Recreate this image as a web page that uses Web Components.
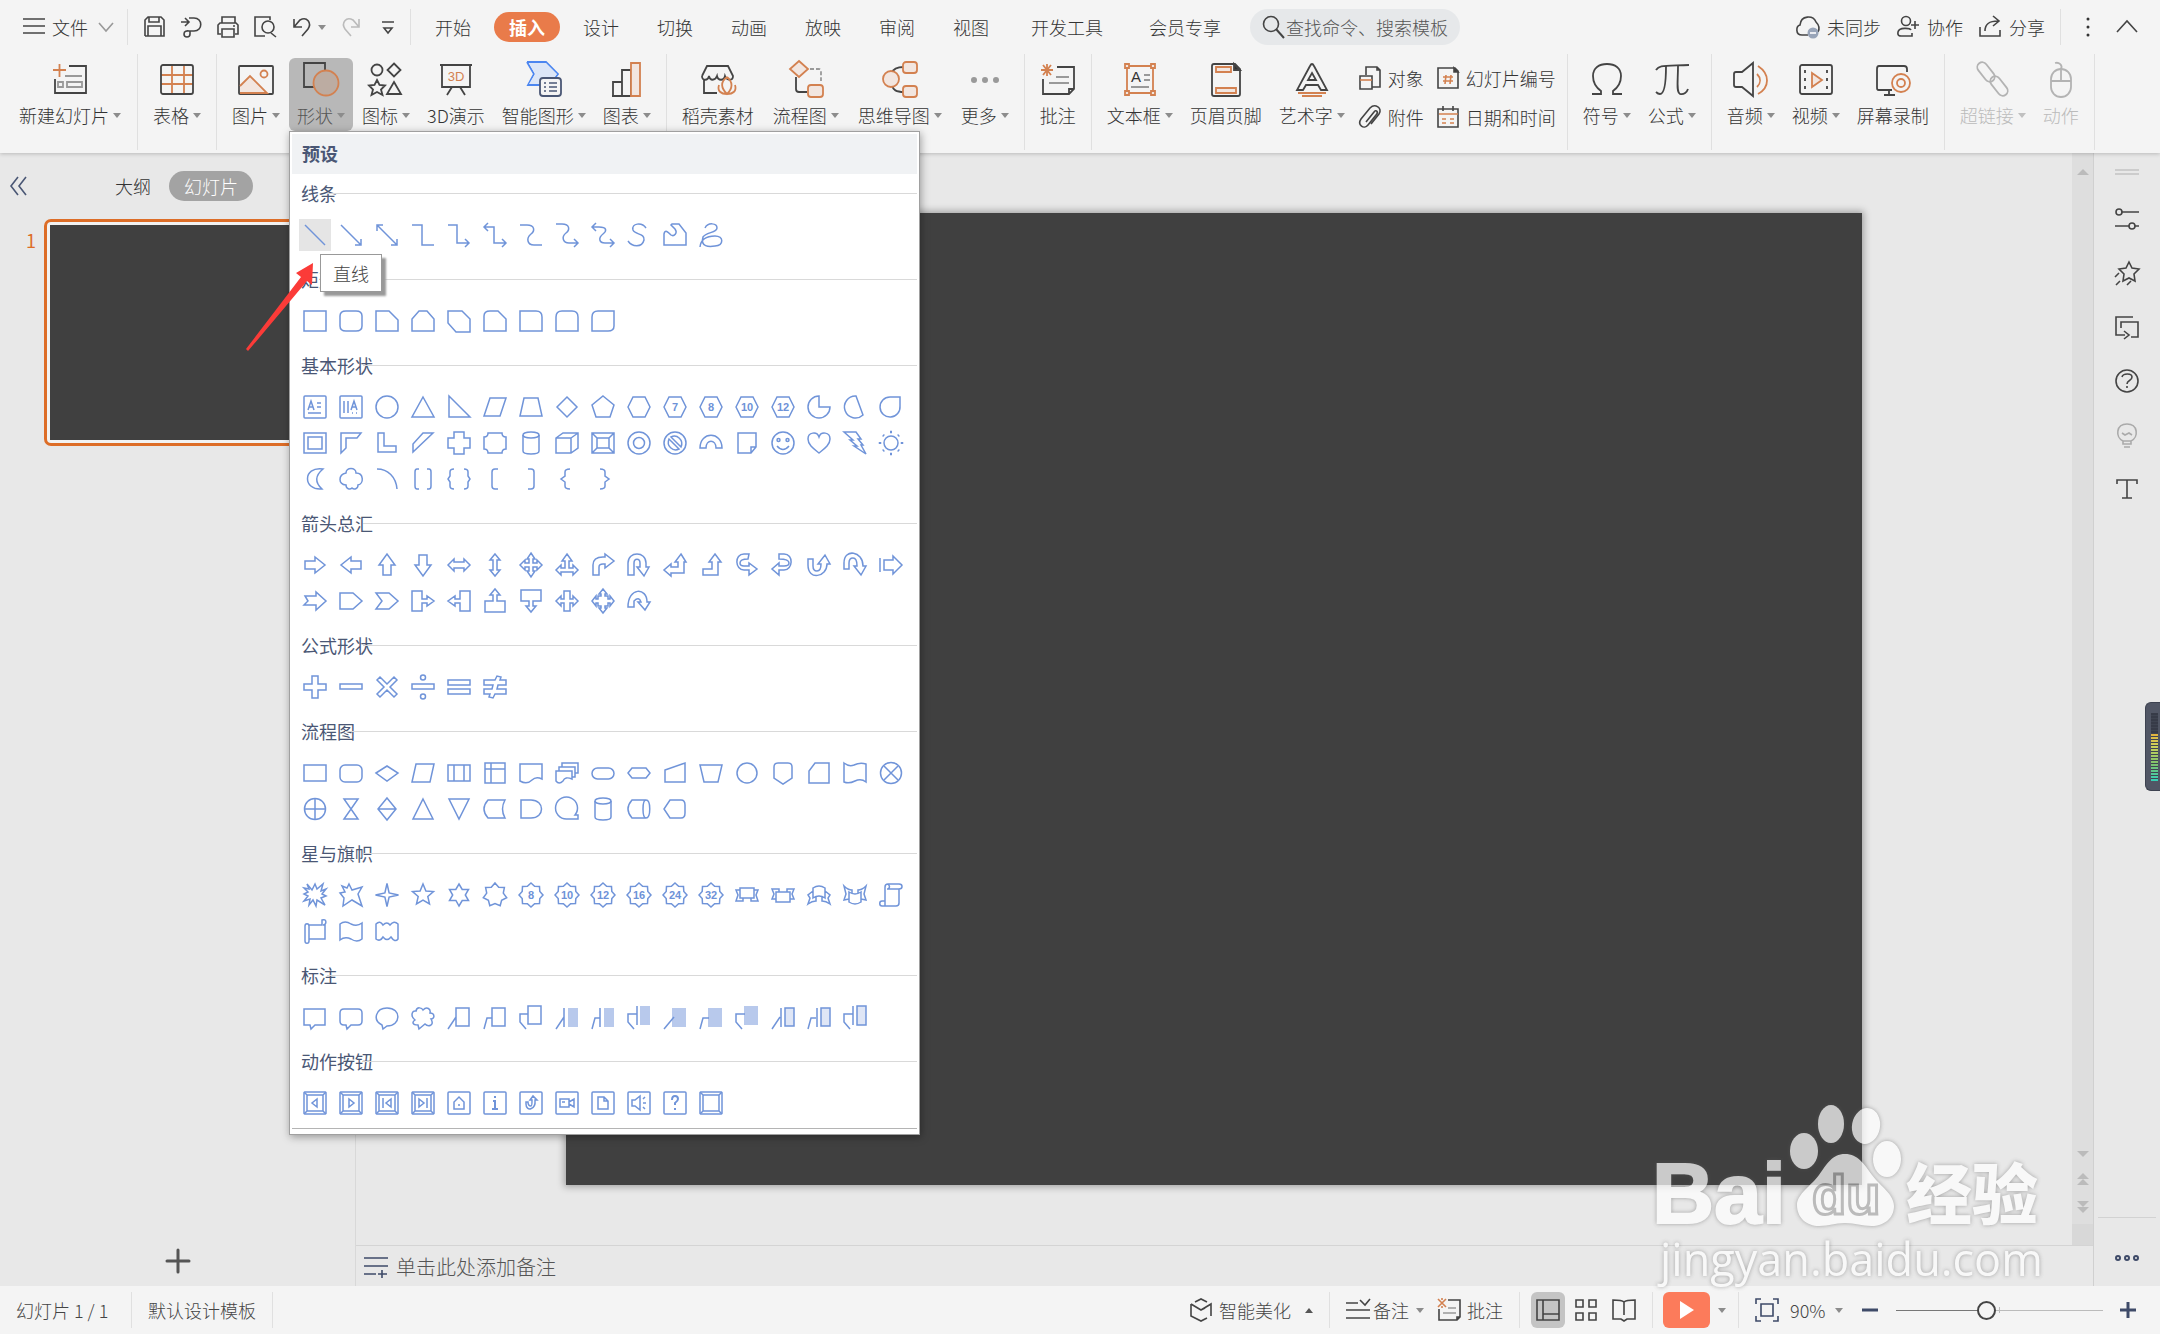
<!DOCTYPE html>
<html lang="zh-CN">
<head>
<meta charset="utf-8">
<title>演示文稿</title>
<style>
html,body{margin:0;height:100%}
body{font:18px/24px "Noto Sans CJK SC","Noto Sans",sans-serif;font-weight:300;color:#333;background:#e8e8e8;overflow:hidden}
</style>
</head>
<body>
<slides-app></slides-app>
<script>
const BASE = `*{box-sizing:border-box}button,input,select{font:inherit;color:inherit;background:none;border:0;padding:0;margin:0;outline:0}button{cursor:pointer;white-space:nowrap}`;
function element(name, css, html, setup) {
  const t = document.createElement('template');
  t.innerHTML = `<style>${BASE}${css}</style>${html}`;
  customElements.define(name, class extends HTMLElement {
    connectedCallback() {
      if (this.shadowRoot) return;
      this.attachShadow({ mode: 'open' }).append(t.content.cloneNode(true));
      if (setup) setup(this, this.shadowRoot);
    }
  });
}

/* ---------- icon drawings ---------- */
const O = '#d38150', F = '#f2e6e0', G = '#999';
const o = (d, f = 'none') => `<path d="${d}" stroke="${O}" fill="${f}"/>`;
const g = d => `<path d="${d}" stroke="${G}"/>`;
const p = (d, x = '') => `<path d="${d}" ${x}/>`;
const BIG = {
  slide: p('M17 5H34V32H3V18') + o('M1 9H14M7.5 3V16') + g('M13 15H30M6 21h5v5h-5zM15 21h15v5h-15z'),
  table: o('M13 4V33M25 4V33M2 14H34M2 23H34') + '<rect x="2" y="4" width="32" height="29" rx="2"/>',
  picture: '<rect x="1" y="5" width="34" height="28" rx="1"/>' + o('M2 25L12 15L29 32H2', F) + `<circle cx="26" cy="13" r="3.5" stroke="${O}"/>`,
  shapes: p('M22 11V2H1V26H12') + `<circle cx="23" cy="22" r="12.5" stroke="${O}" fill="#bcaca2"/>`,
  icons: '<circle cx="9" cy="9" r="5.5"/>' + p('M26 2.5l6.500 6.500-6.500 6.500-6.500-6.500z'.replaceAll('.500', '.5')) + p('M9 19l2.5 5 5.5.5-4 4 1.5 5.5-5.5-3-5.5 3 1.5-5.5-4-4 5.5-.5z') + p('M26 21l7 12h-14z'),
  show3d: p('M2 4H34M4 4V26H32V4M14 26L9 34M22 26L27 34') + `<text x="18" y="20" font-size="13" text-anchor="middle" fill="${O}" stroke="none">3D</text>`,
  smart: '<path d="M1 1H20L32 13L29 17M1 1L8 13L2 24H14" stroke="#4c86f0" fill="none"/><path d="M3 2H20L31 13L28 17H14V23H3L9 13Z" fill="#dce6f7" stroke="none"/><rect x="14" y="17" width="21" height="18" rx="3" fill="#f4f4f4" stroke="#4a5775"/><path d="M18 22h2M18 26h2M18 30h2M23 22h8M23 26h8M23 30h8" stroke="#4a5775" stroke-width="1.5"/>',
  chart: p('M4 35V21H13V35M13 21V9H22V35M3 35H31') + o('M22 2H31V35H22Z', F),
  store: p('M2 15L7 5H28L33 15C33 20 27 20 25 15C24 20 18 20 17 15C15 20 10 20 9 15C8 20 2 20 2 15M4 18V32H17') + o('M27 16C20 21 21 27 27 33C33 27 33 21 27 16M19 24C17 30 21 33 27 33M35 24C37 30 33 33 27 33'),
  flow: p('M8 16V28Q8 31 11 31H19') + o('M11 0L20 8L11 16L2 8Z', F) + `<path d="M22 8H31Q33 8 33 10V20" stroke="#999" stroke-dasharray="4 2"/><rect x="20" y="24" width="15" height="12" rx="3" stroke="${O}" fill="${F}"/>`,
  mind: p('M22 6C14 6 11 8 10 12M10 24C11 29 14 31 22 31') + `<circle cx="9" cy="18" r="8" stroke="${O}" fill="${F}"/><rect x="21" y="1" width="14" height="11" rx="3" stroke="${O}" fill="${F}"/><rect x="21" y="25" width="14" height="11" rx="3" stroke="${O}" fill="${F}"/>`,
  more: '<g fill="#999" stroke="none"><circle cx="7" cy="19" r="3"/><circle cx="18" cy="19" r="3"/><circle cx="29" cy="19" r="3"/></g>',
  note: o('M7 3V15M1 9H13M3 4L11 14M11 4L3 14') + p('M17 6H34V28L29 33H3V18M34 28H29V33') + g('M16 16H29M9 22H29'),
  textbox: o('M5 5H31V32H5Z') + `<g stroke="${O}" fill="${F}"><path d="M3 3h4v4h-4zM29 3h4v4h-4zM3 30h4v4h-4zM29 30h4v4h-4z"/></g><text x="14" y="21" font-size="15" text-anchor="middle" fill="#333" stroke="none">A</text>` + g('M22 14H28M22 19H28M9 26H27'),
  header: p('M4 5Q4 3 6 3H27L32 8V33Q32 35 30 35H6Q4 35 4 33Z') + '<path d="M26 3L32 9H26Z" fill="#333"/>' + o('M8 6H23V11H8ZM8 27H28V32H8Z', F),
  art: p('M16 5Q18 1 20 5L33 29H27L24 24H12L9 29H3ZM18 12L22 19H14Z') + o('M4 32H32M8 35H28'),
  omega: p('M3 33H12V30C5 25 4 20 4 15C4 7 10 3 18 3S32 7 32 15C32 20 31 25 24 30V33H33'),
  pi: p('M2 9C5 4 8 5 35 4M12 5C12 20 11 33 6 33C4 33 3 32 2 31M24 5C24 20 22 31 26 33C30 34 33 31 34 28'),
  audio: p('M3 11H9L20 2V35L9 26H3Q1 26 1 24V13Q1 11 3 11Z') + o('M24 13C28 17 28 22 24 26M25 5C37 13 37 26 25 33'),
  video: '<rect x="2" y="4" width="32" height="29" rx="2"/><path d="M7 9v3M7 17v3M7 25v3M29 9v3M29 17v3M29 25v3"/>' + o('M14 12L24 19L14 26Z', F),
  record: p('M17 29H4C2 29 2 28 2 26V8C2 6 3 5 4 5H29C31 5 32 6 32 8V11M14 29V33M9 34H20') + `<circle cx="26" cy="22" r="9" stroke="${O}"/><circle cx="26" cy="22" r="4" stroke="${O}"/>`,
  link: '<g stroke="#b3b3b3"><rect x="0" y="6" width="22" height="10" rx="5" transform="rotate(52 11 11)"/><rect x="13" y="20" width="22" height="10" rx="5" transform="rotate(52 24 25)"/></g>',
  mouse: '<g stroke="#b3b3b3"><rect x="8" y="8" width="20" height="28" rx="10"/><path d="M8 20H28M18 20V8C20 4 16 1 12 2"/></g>'
};
const SMALL = {
  menu: p('M1 4H23M1 11H23M1 18H23'), down: '<path d="M5 8L12 16L19 8" stroke="#999"/>',
  save: p('M3 21V5L6 2H19L22 5V21H3M6 21V11H19V21M7 2V7H17V2'),
  pdf: p('M2 7H9M6 3l4 4-4 4M10 3H15C24 3 24 16 15 16H11V19C11 23 5 23 5 19C5 15 9 16 11 16'),
  print: p('M6 8V2H19V8M5 19H2V10L4 8H20L22 10V19H19M6 14H18V22H6ZM17 11H19'),
  preview: p('M12 21H2V2H17V5M18 18L23 22') + '<circle cx="15" cy="12" r="6"/>',
  undo: p('M4 4V12H12M4 12L10 5C17 1 22 8 18 14L12 21'),
  redo: '<path d="M20 4V12H12M20 12L14 5C7 1 2 8 6 14L12 21" stroke="#bbb"/>',
  custom: p('M6 7H18M8 13L12 18L16 13Z'), search: p('M14 14L22 23', 'stroke-width="2"') + '<circle cx="9" cy="9" r="7.5"/>',
  cloud: p('M12 20H6C-1 20 0 11 4 10C5 0 17 0 20 7C24 11 23 15 22 17') + '<circle cx="17" cy="18" r="5.5" fill="#98a4b8" stroke="none"/><path d="M14 18H20" stroke="#fff"/>',
  people: p('M15 15C14 13 3 12 2 17C1 22 4 21 16 21V18M15 10H23M19 6V14') + '<circle cx="10" cy="6" r="4.5"/>',
  share: p('M2 12V21H22V15M7 16C7 8 12 6 20 6M15 1L21 6L15 11'), dots: '<g fill="#333" stroke="none"><circle cx="12" cy="4" r="1.5"/><circle cx="12" cy="12" r="1.5"/><circle cx="12" cy="20" r="1.5"/></g>',
  up: p('M2 17L12 6L22 17'),
  object: p('M8 9V1H19L22 4V21H14M19 1V4H22') + p('M2 10H14V23H2Z') + o('M2 14H14'),
  clip: p('M8 17L16 7C18 4 21 7 18 10L10 20C6 25 -1 20 3 14L12 3C17 -2 25 3 21 9L13 19'),
  number: p('M2 2H19L22 5V22H2Z') + '<path d="M18 2L22 6H18Z" fill="#333"/>' + o('M10 9L9 18M15 9L14 18M7 11H17M7 15H17'),
  date: p('M2 4H22V22H2ZM7 1V6M17 1V6') + o('M3 9H22M6 14H10M14 14H18M6 18H10M14 18H18'),
  collapse: '<path d="M12 3L5 12L12 21M20 3L13 12L20 21" stroke="#4a5775"/>',
  plus: '<path d="M12 1V23M1 12H23" stroke="#555" stroke-width="3" stroke-linecap="round"/>',
  remark: '<path d="M0 3H24M0 11H24M0 19H12M14 19H23M18 15V23" stroke="#3e4a68"/>',
  handle: '<path d="M0 10H24M0 14H24" stroke="#c2c2c2"/>',
  sliders: p('M7 5H24M0 19H14M20 19H24') + '<circle cx="4" cy="5" r="3"/><circle cx="17" cy="19" r="3"/>',
  star: p('M14 1l3 6 7 1-5 5 1 7-6-3-6 3 1-7-5-5 7-1zM4 12L0 16M5 20L1 24M16 20L12 24'),
  transit: p('M18 2H1V20H10M9 16l5 4-5 4M6 13V7H23V22H16'),
  help: '<circle cx="12" cy="12" r="11"/>' + p('M7 8C8 4 17 4 17 8C17 12 12 11 12 15M12 17V19'),
  bulb: '<g stroke="#aaa"><path d="M8 18C0 14 1 1 12 1S24 14 16 18ZM8 18V21H16V18M9 24H15M7 10l3 2 4-2 3 2"/></g>',
  type: p('M2 7V3H22V7M12 3V21M7 21H17'),
  ooo: '<g stroke="#3e4a68" stroke-width="2"><circle cx="3" cy="12" r="2"/><circle cx="12" cy="12" r="2"/><circle cx="21" cy="12" r="2"/></g>',
  beauty: p('M6 4L12 1L18 4M2 6V18L12 23L18 20M2 6L12 12L22 6V18M12 12L16 10'),
  remarks: p('M0 5H12M14 2L19 7L24 1M0 12H24M0 20H24'),
  comment: '<path d="M1 1L9 9M9 1L1 9M5 0V2M5 8V10" stroke="#d38150"/>' + p('M11 2H23V19L20 22H2V11M23 19H20V22') + g('M11 10H19M6 15H19'),
  normal: p('M1 2H23V22H1ZM7 2V22M7 16H23'), grid: p('M2 2h7v7h-7zM15 2h7v7h-7zM2 15h7v7h-7zM15 15h7v7h-7z'),
  book: p('M12 4C10 2 7 2 1 2V21H9L12 23L15 21H23V2C17 2 14 2 12 4V17'),
  fit: '<g stroke="#3e4a68"><path d="M1 6V1H6M18 1H23V6M23 18V23H18M6 23H1V18M6 6H18V18H6Z"/></g>',
  minus: '<path d="M4 12H20" stroke="#3e4a68" stroke-width="3"/>', add: '<path d="M4 12H20M12 4V20" stroke="#3e4a68" stroke-width="3"/>'
};

/* ---------- shape gallery drawings, each on a 24 by 24 grid ---------- */
const star = (n, R, r, rot = -90, sx = 1) => 'M' + Array.from({ length: n * 2 }, (_, i) => {
  const a = (rot + i * 180 / n) * Math.PI / 180, q = i % 2 ? r : R;
  return `${(12 + sx * q * Math.cos(a)).toFixed(1)} ${(12 + q * Math.sin(a)).toFixed(1)}`;
}).join('L') + 'Z';
const num = (d, t) => `<path d="${d}"/><text x="12" y="16" font-size="11" font-weight="700" text-anchor="middle" fill="#6d92d8" stroke="none">${t}</text>`;
const circ = (x, y, r) => `<circle cx="${x}" cy="${y}" r="${r}"/>`;
const HEX = 'M1 12L6 2H18L23 12L18 22H6Z', SQ = 'M1 2H23V22H1Z', BOX = '<rect x="1" y="1" width="22" height="22" rx="1"/>';
const SEAL = star(8, 12, 9.5);
const BEV = BOX + '<path d="M4 4H20V20H4ZM1 1L4 4M23 1L20 4M1 23L4 20M23 23L20 20"/>';
const solid = (d, f = '#b8c9ec') => `<path d="${d}" fill="${f}" stroke="none"/>`;
const SHAPES = [
  ['线条', ['M2 2L22 22', 'M2 2L22 22M22 16V22H16', 'M2 2L22 22M22 16V22H16M2 8V2H8', 'M1 2H11V22H23', 'M1 2H10V20H22M18 16l4 4-4 4', 'M5 0L1 4l4 4M1 4H11V20H23M19 16l4 4-4 4', 'M1 2H8C16 2 16 8 12 11C7 15 8 22 15 22H23', 'M1 1H7C15 1 15 7 11 10C6 14 8 20 14 20H23M19 16l4 4-4 4', 'M5 0L1 4l4 4M1 4H8C16 4 16 8 12 11C7 15 8 20 14 20H23M19 16l4 4-4 4', 'M19 5C15 -1 4 0 6 7C8 12 18 10 17 17C15 25 5 24 1 18', 'M1 22V11C2 6 5 9 8 12C11 14 15 10 12 6L8 2L9 1H16L23 10V22Z', 'M6 5C9 -1 18 0 18 5C18 10 7 9 4 14C1 24 10 24 16 23C25 22 25 13 16 13C10 13 2 15 1 24']],
  ['矩形', [SQ, 'M7 2H17Q23 2 23 7V17Q23 22 17 22H7Q1 22 1 17V7Q1 2 7 2Z', 'M1 2H14L23 11V22H1Z', 'M1 22V10L8 2H16L23 10V22Z', 'M1 2H15L23 10V23H9L1 14Z', 'M1 22V7Q1 2 7 2H15L23 10V22Z', 'M1 2H17Q23 2 23 8V22H1Z', 'M1 22V8Q1 2 7 2H17Q23 2 23 8V22Z', 'M1 22V8Q1 2 7 2H23V17Q23 22 17 22Z']],
  ['基本形状', [
    BOX + '<path d="M5 15L8 6L11 15M6 12H10M14 8H18M14 12H18M5 18H18"/>', BOX + '<path d="M5 6V18M9 6V18M12 15L15 6L18 15M13 12H17M13 18H14M17 18H18"/>', circ(12, 12, 11), 'M12 2L23 22H1Z', 'M2 1V22H23Z', 'M7 3H23L17 21H1Z', 'M5 3H19L23 21H1Z', 'M12 2L22 12L12 22L2 12Z', 'M12 1L23 10L19 22H5L1 10Z', HEX,
    num(HEX, 7), num(HEX, 8), num(HEX, 10), num(HEX, 12), 'M12 1V12H23A11 11 0 1 1 12 1Z', 'M13 1A11 11 0 1 0 20 20Z', 'M21 2V11A10 10 0 1 1 11 2Z',
    '<path d="M1 2H23V22H1ZM5 6H19V18H5Z"/>', 'M2 2H22L18 7H7V17L2 22Z', 'M3 2H9V15H21V21H3Z', 'M2 21V13L12 2H22Z', 'M7 1H17V7H23V17H17V23H7V17H1V7H7Z', 'M5 2H19Q19 6 23 6V18Q19 18 19 22H5Q5 18 1 18V6Q5 6 5 2Z', '<ellipse cx="12" cy="4" rx="8" ry="3"/><path d="M4 4V20C4 24 20 24 20 20V4"/>', 'M1 7L8 2H23V17L16 22H1ZM1 7H16V22M16 7L23 2', '<path d="M1 2H23V22H1ZM6 7H18V17H6ZM1 2L6 7M23 2L18 7M1 22L6 17M23 22L18 17"/>', circ(12, 12, 11) + circ(12, 12, 5.5), circ(12, 12, 11) + '<path d="M8 6L18 16C21 9 14 3 8 6ZM6 8C3 15 10 21 16 18Z"/>', 'M1 17C1 0 23 0 23 17H17C17 8 7 8 7 17Z', 'M3 2H21V16L16 22H3ZM21 16H16V22', circ(12, 12, 11) + circ(7.5, 9, 1.5) + circ(16.5, 9, 1.5) + '<path d="M6 15Q12 22 18 15"/>', 'M12 22C7 18 1 14 1 8C1 1 10 0 12 6C14 0 23 1 23 8C23 14 17 18 12 22Z', 'M1 1H13L18 8H15L20 14H18L23 23L11 15H14L7 9H10Z', circ(12, 12, 7) + '<path d="M11 1h2M11 23h2M1 11v2M23 11v2M4 4l1 1M19 5l1-1M4 20l1-1M19 19l1 1" stroke-width="2.5"/>',
    'M20 2C-1 -1 0 24 19 22Q8 12 20 2Z', 'M7 6C7 0 17 0 17 6C25 6 25 17 19 18C19 22 15 23 13 21C11 23 7 22 7 18C-1 17 -1 8 7 6Z', 'M2 2C13 2 21 10 22 22', 'M8 2H6Q4 2 4 5V19Q4 22 6 22H8M16 2H18Q20 2 20 5V19Q20 22 18 22H16', 'M7 2Q3 2 3 5V9L1 12L3 15V19Q3 22 7 22M17 2Q21 2 21 5V9L23 12L21 15V19Q21 22 17 22', 'M15 2H12Q9 2 9 5V19Q9 22 12 22H15', 'M9 2H12Q15 2 15 5V19Q15 22 12 22H9', 'M15 2Q10 2 10 5V9L6 12L10 15V19Q10 22 15 22', 'M9 2Q14 2 14 5V9L18 12L14 15V19Q14 22 9 22']],
  ['箭头总汇', [
    'M2 8H12V4L22 12L12 20V16H2Z', 'M22 8H12V4L2 12L12 20V16H22Z', 'M8 22V12H4L12 1L20 12H16V22Z', 'M8 2V12H4L12 23L20 12H16V2Z', 'M1 12L7 6V9H17V6L23 12L17 18V15H7V18Z', 'M12 1L17 7H14V17H17L12 23L7 17H10V7H7Z', 'M12 0l4 6h-2v4h4v-3l5 5-5 5v-3h-4v4h2l-4 6-4-6h2v-4h-4v3l-5-5 5-5v3h4v-4h-2z', 'M12 1l5 7h-3v7h4v-3l5 5-5 5v-3h-12v3l-5-5 5-5v3h4v-7h-3z', 'M2 22V12Q2 4 12 4H14V1L23 8L14 15V11H12Q8 11 8 14V22Z', 'M1 22V10C1 -2 19 -2 19 10V14H22L17 23L10 14H13V10C13 5 7 5 7 10V22Z', 'M18 1L23 9H21V20H8V23L1 17L8 11V14H15V9H12Z', 'M16 1L22 9H19V22H4V16H13V9H10Z', 'M14 1H9C-1 1 0 17 9 17H14V22L22 16L14 10V13H9Q5 13 5 10Q5 6 13 6Z', 'M8 1H13C23 1 22 17 13 17H8V22L1 16L8 10V13H13Q18 13 18 10Q18 6 8 6Z', 'M1 6H6V13Q6 18 10 18Q14 18 14 11H11L18 2L23 11H20C20 24 1 28 1 12Z', 'M1 16H6V10Q6 5 10 5Q14 5 14 13H11L18 22L23 13H20C20 -2 1 -5 1 10Z', 'M1 5V19M5 7H14V3L23 12L14 21V17H5Z',
    'M2 7H13V3L23 12L13 21V16H1L5 12Z', 'M1 4H14L23 12L14 20H1Z', 'M1 4H14L23 12L14 20H1L7 12Z', 'M1 2H11V10H16V7L23 12L16 17V14H11V22H1Z', 'M23 2H13V10H8V7L1 12L8 17V14H13V22H23Z', 'M2 23V12H10V6H7L12 0L17 6H14V12H22V23Z', 'M2 1V12H10V17H7L12 23L17 17H14V12H22V1Z', 'M9 2H15V10H18V7L23 12L18 17V14H15V22H9V14H6V17L1 12L6 7V10H9Z', 'M12 0L16 5H14V7H17V10H19V7L23 12L19 17V14H17V17H14V19H16L12 24L8 19H10V17H7V14H5V17L1 12L5 7V10H7V7H10V5H8Z', 'M1 18C1 -2 20 -2 20 13H23L18 21L11 13H14Q12 7 7 12V18Z']],
  ['公式形状', ['M9 1H15V9H23V15H15V23H9V15H1V9H9Z', 'M1 9H23V14H1Z', 'M5 2L12 9L19 2L22 5L15 12L22 19L19 22L12 15L5 22L2 19L9 12L2 5Z', 'M1 9H23V14H1Z' + 'M12 0A2 2 0 1 1 12 5A2 2 0 1 1 12 0M12 19A2 2 0 1 1 12 24A2 2 0 1 1 12 19', 'M1 5H23V10H1ZM1 14H23V19H1Z', 'M1 5H12L14 1L18 2L17 5H23V10H15L14 14H23V19H12L10 23L6 22L7 19H1V14H9L10 10H1Z']],
  ['流程图', ['M1 4H23V20H1Z', '<rect x="1" y="4" width="22" height="17" rx="5"/>', 'M1 12L12 5L23 12L12 20Z', 'M5 3H23L19 21H1Z', 'M1 4H23V20H1ZM7 4V20M17 4V20', 'M2 2H22V22H2ZM8 2V22M2 8H22', 'M1 3H23V18Q17 15 13 19Q8 24 1 20Z', 'M1 10H17V18Q10 15 8 20Q4 24 1 20ZM4 10V6H20V16H17M7 6V2H23V12H20', '<rect x="1" y="7" width="22" height="11" rx="5.5"/>', 'M1 12L5 7H19L23 12L19 17H5Z', 'M2 9L22 2V21H2Z', 'M1 4H23L19 21H5Z', circ(12, 12, 10), 'M3 6Q3 2 7 2H17Q21 2 21 6V17L12 23L3 17Z', 'M8 2H22V22H2V10Z', 'M1 2Q6 6 11 4Q17 1 23 3V21Q18 17 12 20Q6 23 1 21Z', circ(12, 12, 10.5) + '<path d="M5 5L19 19M19 5L5 19"/>',
    circ(12, 12, 10.5) + '<path d="M12 1V23M1 12H23"/>', 'M5 2H19L5 22H19Z', 'M12 1L21 12L12 23L3 12ZM3 12H21', 'M12 2L22 22H2Z', 'M2 2H22L12 22Z', 'M5 3H22Q17 12 22 21H5Q-3 12 5 3Z', 'M2 3H12C26 3 26 21 12 21H2Z', 'M23 22H12A11 11 0 1 1 20 18H23Z', '<ellipse cx="12" cy="4" rx="8" ry="3"/><path d="M4 4V20C4 24 20 24 20 20V4"/>', 'M19 3H5Q-3 12 5 21H19C24 21 24 3 19 3C15 3 15 21 19 21', 'M7 3H18Q22 3 22 8V16Q22 21 18 21H7L1 12Z']],
  ['星与旗帜', ['M4 1L9 7L12 1L14 6L20 1L18 8L23 6L19 11L23 13L18 15L22 22L14 17L13 23L10 17L6 22L7 16L1 18L5 13L1 11L5 9L1 5L6 6Z', 'M10 1L13 7L23 4L19 11L23 23L13 17L4 23L5 15L1 10L6 9L3 3L8 5Z', star(4, 11.5, 3), star(5, 11, 5), star(6, 11, 6.3), star(7, 12, 8.5), num(SEAL, 8), num(SEAL, 10), num(SEAL, 12), num(SEAL, 16), num(SEAL, 24), num(SEAL, 32),
    'M5 5H19V15H5ZM5 7H1L3 12L1 18H8V15M19 7H23L21 12L23 18H16V15', 'M5 9H19V19H5ZM5 16H1L3 11L1 6H8V9M19 16H23L21 11L23 6H16V9', 'M6 5Q12 1 18 5V15Q12 11 6 15ZM6 8L1 12L3 15L1 21Q5 18 9 18V14M18 8L23 12L21 15L23 21Q19 18 15 18V14', 'M6 9Q12 13 18 9V19Q12 23 6 19ZM6 16L1 17L3 11L1 3Q5 7 9 7V10M18 16L23 17L21 11L23 3Q19 7 15 7V10', 'M6 20V4Q6 1 9 1H20C24 1 24 6 20 6H8M20 6V20Q20 23 17 23H3C0 23 0 18 3 18H6M6 18V23M9 1Q12 4 9 6',
    'M6 6H19V1C24 -1 24 6 20 6H22V20H6M19 6V1M2 7C2 4 6 4 6 7V22C6 25 2 25 2 22Z', 'M1 5Q6 1 12 5Q18 8 23 4V20Q18 24 12 20Q6 17 1 21Z', 'M1 5Q5 1 8 6Q12 2 15 6Q19 1 23 5V20Q20 24 16 18Q12 23 8 18Q5 23 1 20Z']],
  ['标注', ['M1 4H22V20H12L8 24L7 20H1Z', 'M5 4H19Q23 4 23 8V16Q23 20 19 20H12L8 24L7 20H5Q1 20 1 16V8Q1 4 5 4Z', 'M8 24L7 20C-3 15 1 3 12 3C27 3 26 21 12 21Z', 'M8 24L7 20C1 20 1 17 4 15C-1 11 1 5 5 6C6 1 11 3 12 5C16 1 20 4 19 8C24 8 24 14 20 14C24 21 17 22 14 19Z', 'M9 3H22V21H9ZM1 24L9 12', 'M9 3H22V21H9ZM1 24L4 13H9', 'M9 1H22V19H9ZM9 9H1V17L7 24',
    solid('M13 3H23V22H13Z') + '<path d="M9 3V22M1 24L9 12"/>', solid('M13 3H23V22H13Z') + '<path d="M9 3V22M1 24L4 13H9"/>', solid('M13 1H23V20H13Z') + '<path d="M10 1V20M10 9H1V17L7 24"/>', solid('M9 3H23V22H9Z') + '<path d="M1 24L11 12"/>', solid('M9 3H23V22H9Z') + '<path d="M1 24L4 13H10"/>', solid('M9 1H23V20H9Z') + '<path d="M10 9H1V17L7 24"/>',
    solid('M14 3H23V21H14Z', '#dfe6f6') + '<path d="M14 3H23V21H14ZM10 3V22M1 24L9 12"/>', solid('M14 3H23V21H14Z', '#dfe6f6') + '<path d="M14 3H23V21H14ZM10 3V22M1 24L4 13H9"/>', solid('M14 1H23V20H14Z', '#dfe6f6') + '<path d="M14 1H23V20H14ZM10 1V20M10 9H1V17L7 24"/>']],
  ['动作按钮', [BEV + '<path d="M14 8V16L9 12Z"/>', BEV + '<path d="M10 8V16L15 12Z"/>', BEV + '<path d="M16 8V16L11 12ZM8 7V17"/>', BEV + '<path d="M8 8V16L13 12ZM16 7V17"/>', BOX + '<path d="M7 18V11L12 6L17 11V18ZM12 13V15"/>', BOX + '<path d="M12 5V7M10 10H12V18M9 18H15" stroke-width="2"/>', BOX + '<path d="M7 11H9Q9 15 12 15Q13 15 13 9H11L14 5L18 9H16C17 19 7 21 7 13Z"/>', BOX + '<path d="M5 8H14V16H5ZM14 11L19 8V16L14 13M7 11H10"/>', BOX + '<path d="M7 6H13L17 10V18H7ZM13 6V10H17"/>', BOX + '<path d="M5 9H8L13 5V19L8 15H5ZM16 12H19M16 8L18 6M16 16L18 18"/>', BOX + '<path d="M9 9Q9 5 12 5Q15 5 15 8Q15 10 12 12V14M12 17V19" stroke-width="2"/>', BEV]]
];

element('ui-icon', `:host{display:inline-flex;flex:none;width:24px;height:24px}:host([big]){width:36px;height:36px}div{width:100%;height:100%}svg{display:block;width:100%;height:100%;overflow:visible;font-family:"Liberation Sans",sans-serif}`, '<div></div>', (host, root) => {
  const big = host.hasAttribute('big'), n = host.getAttribute('name');
  root.querySelector('div').innerHTML = `<svg viewBox="0 0 ${big ? '36 36' : '24 24'}" fill="none" stroke="#444" stroke-width="${big ? 1.8 : 1.6}" aria-hidden="true">${(big ? BIG : SMALL)[n]}</svg>`;
});

element('ui-caret', `:host{display:inline-block;flex:none;width:0;height:0;border:4px solid transparent;border-top:5px solid #8c8c8c;border-bottom:0}:host([up]){border-top:0;border-bottom:5px solid #555}:host([tip]){border-width:6px;border-top:0;border-bottom:6px solid #bbb}:host([down]){border-width:6px;border-bottom:0;border-top:6px solid #bbb}`, '');
element('ui-divider', `:host{flex:none;width:1px;background:#e0e0e0;align-self:center;height:36px}`, '');

/* ---------- title bar ---------- */
element('title-bar', `
:host{display:flex;align-items:center;height:54px;padding:0 21px 0 22px}
button{display:flex;align-items:center;height:30px}
.file{gap:6px}
.quick{display:flex;align-items:center;gap:13px;padding:0 10px 0 14px}
.undo{gap:4px}
nav{display:flex;align-items:center;padding-left:5px}
nav button{padding:0 15px;margin:0 4px;border-radius:15px}
nav .wide{margin:0 8px}
nav .on{background:#e97b4a;color:#fff;font-weight:700}
label{display:flex;align-items:center;width:210px;height:36px;margin-left:6px;padding:0 10px 0 12px;border-radius:18px;background:#e6e8ea}
input{width:164px}
input::placeholder{color:#555;opacity:1}
.end{display:flex;align-items:center;gap:15px;margin-left:auto}
.end button{gap:7px}`,
`<button class="file"><ui-icon name="menu"></ui-icon>文件<ui-icon name="down"></ui-icon></button>
<ui-divider style="margin-left:9px"></ui-divider>
<div class="quick"><button aria-label="保存"><ui-icon name="save"></ui-icon></button><button aria-label="输出为PDF"><ui-icon name="pdf"></ui-icon></button><button aria-label="打印"><ui-icon name="print"></ui-icon></button><button aria-label="打印预览"><ui-icon name="preview"></ui-icon></button><button class="undo" aria-label="撤销"><ui-icon name="undo"></ui-icon><ui-caret></ui-caret></button><button aria-label="恢复"><ui-icon name="redo"></ui-icon></button><button aria-label="自定义"><ui-icon name="custom"></ui-icon></button></div>
<ui-divider></ui-divider>
<nav><button>开始</button><button class="on">插入</button><button>设计</button><button>切换</button><button>动画</button><button>放映</button><button>审阅</button><button>视图</button><button class="wide">开发工具</button><button class="wide">会员专享</button></nav>
<label><ui-icon name="search"></ui-icon><input type="text" placeholder="查找命令、搜索模板" aria-label="查找命令、搜索模板"></label>
<div class="end"><button><ui-icon name="cloud"></ui-icon>未同步</button><button><ui-icon name="people"></ui-icon>协作</button><button><ui-icon name="share"></ui-icon>分享</button><ui-divider></ui-divider><button aria-label="更多"><ui-icon name="dots"></ui-icon></button><button aria-label="收起功能区"><ui-icon name="up"></ui-icon></button></div>`);

/* ---------- ribbon ---------- */
element('ribbon-tool', `
:host{display:block;position:relative}
button{display:flex;flex-direction:column;align-items:center;gap:6px;height:73px;padding:3px 8px 4px;border-radius:6px}
:host([active]) button{background:#b8b8b8;color:#555}
:host([disabled]) button{color:#bbb}
span{display:flex;align-items:center;gap:4px;line-height:24px}
:host([disabled]) ui-caret{opacity:.5}
slot[name=menu]{display:block;position:absolute;left:0;top:100%;z-index:5}`,
`<button><ui-icon big></ui-icon><span><slot></slot></span></button><slot name="menu"></slot>`, (host, root) => {
  if (host.hasAttribute('menu')) root.querySelector('span').append(document.createElement('ui-caret'));
  const old = root.querySelector('ui-icon'), ic = document.createElement('ui-icon');
  ic.setAttribute('big', ''); ic.setAttribute('name', host.getAttribute('icon'));
  old.replaceWith(ic);
  if (host.hasAttribute('disabled')) root.querySelector('button').disabled = true;
});
element('ribbon-group', `:host{display:flex;align-items:flex-start;gap:1px;padding:4px 7px 0;border-right:1px solid #e0e0e0;height:96px}`, `<slot></slot>`);
element('ribbon-pairs', `:host{display:grid;grid-template-columns:auto auto;gap:0 12px;padding:0 4px}button{display:flex;align-items:center;gap:6px;height:39px}`,
`<button><ui-icon name="object"></ui-icon>对象</button><button><ui-icon name="number"></ui-icon>幻灯片编号</button><button><ui-icon name="clip"></ui-icon>附件</button><button><ui-icon name="date"></ui-icon>日期和时间</button>`);
element('tool-ribbon', `
:host{display:flex;align-items:flex-start;height:99px;position:relative;z-index:3}
.first{padding:4px 8px 0 11px}.loose{gap:3px}`,
`<ribbon-group class="first"><ribbon-tool icon="slide" menu>新建幻灯片</ribbon-tool></ribbon-group>
<ribbon-group><ribbon-tool icon="table" menu>表格</ribbon-tool></ribbon-group>
<ribbon-group><ribbon-tool icon="picture" menu>图片</ribbon-tool><ribbon-tool icon="shapes" menu active>形状<shape-gallery slot="menu"></shape-gallery></ribbon-tool><ribbon-tool icon="icons" menu>图标</ribbon-tool><ribbon-tool icon="show3d">3D演示</ribbon-tool><ribbon-tool icon="smart" menu>智能图形</ribbon-tool><ribbon-tool icon="chart" menu>图表</ribbon-tool></ribbon-group>
<ribbon-group class="loose"><ribbon-tool icon="store">稻壳素材</ribbon-tool><ribbon-tool icon="flow" menu>流程图</ribbon-tool><ribbon-tool icon="mind" menu>思维导图</ribbon-tool><ribbon-tool icon="more" menu>更多</ribbon-tool></ribbon-group>
<ribbon-group><ribbon-tool icon="note">批注</ribbon-tool></ribbon-group>
<ribbon-group><ribbon-tool icon="textbox" menu>文本框</ribbon-tool><ribbon-tool icon="header">页眉页脚</ribbon-tool><ribbon-tool icon="art" menu>艺术字</ribbon-tool><ribbon-pairs></ribbon-pairs></ribbon-group>
<ribbon-group><ribbon-tool icon="omega" menu>符号</ribbon-tool><ribbon-tool icon="pi" menu>公式</ribbon-tool></ribbon-group>
<ribbon-group><ribbon-tool icon="audio" menu>音频</ribbon-tool><ribbon-tool icon="video" menu>视频</ribbon-tool><ribbon-tool icon="record">屏幕录制</ribbon-tool></ribbon-group>
<ribbon-group><ribbon-tool icon="link" menu disabled>超链接</ribbon-tool><ribbon-tool icon="mouse" disabled>动作</ribbon-tool></ribbon-group>`);

/* ---------- shape gallery ---------- */
element('shape-gallery', `
:host{display:block;width:631px;padding:2px 2px 5px;background:#fff;border:1px solid #a0a0a0;box-shadow:1px 2px 8px rgba(0,0,0,.35);color:#4a5775;position:relative}
h2{margin:0 0 3px;padding:7px 10px 9px;font-size:18px;line-height:24px;font-weight:700;background:#f0f2f4}
h3{display:flex;align-items:center;margin:0;padding-left:9px;height:32px;font-size:18px;line-height:24px;font-weight:400}
h3::after{content:"";flex:1;height:1px;margin-left:-10px;background:#d9d9d9}
.cells{display:flex;flex-wrap:wrap;gap:4px;padding:10px 0 12px 7px}
.cells button{width:32px;height:32px;display:flex;align-items:center;justify-content:center}
.cells .hover{background:#e5e5e5}
.cells svg{width:24px;height:24px;overflow:visible;font-family:"Liberation Sans Narrow","Liberation Sans",sans-serif}
footer{height:1px;background:#b4b4b4;margin-top:-3px}
.tip{position:absolute;left:30px;top:122px;padding:6px 12px;border:1px solid #999;background:#fff;color:#444;line-height:24px;box-shadow:4px 4px 2px #999}
.arrow{position:absolute;left:-44px;top:129px;width:70px;height:92px;overflow:visible}`,
`<h2>预设</h2><div class="list"></div><footer></footer><div class="tip" role="tooltip">直线</div>
<svg class="arrow" viewBox="0 0 70 92" aria-hidden="true"><path d="M67 2L50 12L55 16L0 88L2 90L61 20L66 24Z" fill="#fb3b38"/></svg>`, (host, root) => {
  root.querySelector('.list').innerHTML = SHAPES.map(([name, items], s) => `<section><h3>${name}</h3><div class="cells">${items.map((d, i) =>
    `<button${s + i === 0 ? ' class="hover"' : ''} aria-label="${name} ${i + 1}"><svg viewBox="0 0 24 24" fill="none" stroke="#7094d9" stroke-width="1.5">${d[0] === '<' ? d : `<path d="${d}"/>`}</svg></button>`).join('')}</div></section>`).join('');
});

/* ---------- workspace ---------- */
element('slide-panel', `
:host{display:flex;flex-direction:column;width:356px;flex:none;border-right:1px solid #d8d8d8;padding-top:18px}
.tabs{display:flex;align-items:center;height:30px;padding-left:6px}
.tabs button{display:flex;align-items:center;height:30px}
.outline{margin:0 18px 0 85px}
.on{padding:0 15px;border-radius:15px;background:#a3a3a3;color:#fff}
.item{display:flex;gap:8px;padding:18px 0 0 26px;color:#dd6d27;font-weight:400}
.item span{padding-top:9px}
.thumb{width:292px;aspect-ratio:292/227;padding:3px;border:3px solid #dd6d27;border-radius:7px;background:#f2f2f2;background-clip:padding-box}
.thumb div{height:100%;background:#404040}
.new{margin:auto 0 13px;align-self:center;height:24px}`,
`<div class="tabs"><button aria-label="收起"><ui-icon name="collapse"></ui-icon></button><button class="outline">大纲</button><button class="on">幻灯片</button></div>
<div class="item"><span>1</span><div class="thumb"><div></div></div></div>
<button class="new" aria-label="新建幻灯片"><ui-icon name="plus"></ui-icon></button>`);

element('slide-stage', `
:host{display:flex;flex-direction:column;flex:1;min-width:0;border-right:1px solid #d0d0d0}
.view{display:flex;flex:1;min-height:0;border-bottom:1px solid #d4d4d4}
.canvas{display:flex;flex:1;align-items:center;justify-content:center}
.page{height:calc(100% - 120px);aspect-ratio:4/3;background:#404040;box-shadow:0 0 7px 2px rgba(0,0,0,.3)}
.bar{display:flex;flex-direction:column;align-items:center;width:21px;background:#dedede;padding-top:16px}
.bar div{display:flex;flex-direction:column;margin-bottom:16px}
.bar .last{margin-bottom:11px}
.bar .end{align-self:stretch;height:21px;margin:0;background:#d8d8d8}
.bar .space{flex:1;margin:0}
.notes{display:flex;align-items:center;gap:8px;height:40px;padding:2px 8px 0}
input{flex:1;font-size:20px;line-height:28px;height:28px}
input::placeholder{color:#555;opacity:1}`,
`<div class="view"><div class="canvas"><div class="page"></div></div>
<div class="bar"><ui-caret tip></ui-caret><div class="space"></div><div><ui-caret down></ui-caret></div><div><ui-caret tip></ui-caret><ui-caret tip></ui-caret></div><div class="last"><ui-caret down></ui-caret><ui-caret down></ui-caret></div><div class="end"></div></div></div>
<div class="notes"><ui-icon name="remark"></ui-icon><input type="text" placeholder="单击此处添加备注" aria-label="单击此处添加备注"></div>`);

element('side-rail', `
:host{display:flex;flex-direction:column;align-items:center;width:66px;flex:none;padding:7px 0 16px;position:relative}
button{height:24px;margin-bottom:30px}
.handle{margin-bottom:23px}
hr{width:58px;border:0;height:1px;background:#d2d2d2;margin:auto 0 28px}
.more{margin:0}
.meter{position:absolute;right:0;top:549px;width:15px;height:89px;border-radius:6px 0 0 6px;background:#515665;border:1px solid #3d4250;border-right:0;padding:10px 2px 9px 5px}
.meter div{height:100%;background:repeating-linear-gradient(transparent 0 2px,#3f4451 2px 3px),linear-gradient(#373b48 0 29%,#e5b13e 30%,#cfd35a 48%,#7dc26d 75%,#35d0b8)}`,
`<button class="handle" aria-label="拖动"><ui-icon name="handle"></ui-icon></button><button aria-label="属性"><ui-icon name="sliders"></ui-icon></button><button aria-label="动画"><ui-icon name="star"></ui-icon></button><button aria-label="切换"><ui-icon name="transit"></ui-icon></button><button aria-label="帮助"><ui-icon name="help"></ui-icon></button><button aria-label="灵感"><ui-icon name="bulb"></ui-icon></button><button aria-label="字体"><ui-icon name="type"></ui-icon></button><hr><button class="more" aria-label="更多"><ui-icon name="ooo"></ui-icon></button><div class="meter"><div></div></div>`);

/* ---------- status bar ---------- */
element('status-bar', `
:host{display:flex;align-items:center;height:48px;padding:0 20px 0 16px;background:#f4f4f4;color:#444}
ui-divider{margin:0 16px}
.count{min-width:99px}
button{display:flex;align-items:center;gap:6px;height:36px}
.right{display:flex;align-items:center;margin-left:auto}
.views{display:flex;align-items:center;gap:4px;margin:0 -5px}
.views button{width:34px;justify-content:center;border-radius:6px}
.views .on{background:#c4c4c4}
.play{width:47px;justify-content:center;border-radius:6px;background:#fc7b5b;margin:0 8px 0 -6px}
.play i{border:9px solid transparent;border-left:14px solid #fff;border-right:0}
select{appearance:none;width:40px}
.zoom{display:flex;align-items:center;gap:5px;margin:0 15px 0 11px}
input{appearance:none;width:207px;height:20px;margin:0 13px 0 14px;background:linear-gradient(#bbb,#bbb) 50% 50%/1px 6px no-repeat,linear-gradient(90deg,#777 43%,#bbb 43%) center/100% 1px no-repeat}
input::-webkit-slider-thumb{appearance:none;width:19px;height:19px;border-radius:50%;background:#f4f4f4;border:2px solid #444}`,
`<span class="count">幻灯片 1 / 1</span><ui-divider></ui-divider><span>默认设计模板</span><ui-divider></ui-divider>
<div class="right"><button><ui-icon name="beauty"></ui-icon>智能美化<ui-caret up style="margin-left:8px"></ui-caret></button><ui-divider></ui-divider>
<button style="gap:3px"><ui-icon name="remarks"></ui-icon>备注<ui-caret style="margin-left:4px"></ui-caret></button><button style="margin-left:13px"><ui-icon name="comment"></ui-icon>批注</button><ui-divider></ui-divider>
<div class="views"><button class="on" aria-label="普通视图"><ui-icon name="normal"></ui-icon></button><button aria-label="幻灯片浏览"><ui-icon name="grid"></ui-icon></button><button aria-label="阅读视图"><ui-icon name="book"></ui-icon></button></div><ui-divider></ui-divider>
<button class="play" aria-label="放映"><i></i></button><ui-caret></ui-caret><ui-divider style="margin-left:12px"></ui-divider>
<button aria-label="适应窗口"><ui-icon name="fit"></ui-icon></button><div class="zoom"><select aria-label="缩放比例"><option>90%</option></select><ui-caret></ui-caret></div>
<button aria-label="缩小"><ui-icon name="minus"></ui-icon></button><input type="range" min="0" max="100" value="43" aria-label="缩放"><button aria-label="放大"><ui-icon name="add"></ui-icon></button></div>`);

/* ---------- watermark ---------- */
element('site-mark', `
:host{display:block;position:absolute;right:112px;bottom:42px;width:392px;height:190px;z-index:6;pointer-events:none;opacity:.72}
svg{display:block;width:100%;height:100%;overflow:visible;filter:drop-shadow(0 0 2px rgba(90,90,90,.7))}`,
`<svg viewBox="0 0 392 190" fill="#fff" aria-hidden="true">
<ellipse cx="148" cy="49" rx="14" ry="18"/><ellipse cx="175" cy="22" rx="13" ry="19"/><ellipse cx="210" cy="24" rx="14" ry="18" transform="rotate(10 210 24)"/><ellipse cx="231" cy="57" rx="14" ry="18"/>
<path d="M189 52C202 52 208 62 216 73C224 84 238 92 238 104C238 117 227 124 216 124C205 124 200 121 189 121C178 121 174 124 163 124C151 124 141 116 141 103C141 92 155 84 163 73C171 62 176 52 189 52Z"/>
<text x="-4" y="121" font-family="Liberation Sans" font-weight="700" font-size="86" stroke="#fff" stroke-width="2">Bai</text>
<text x="156" y="112" font-family="Liberation Sans" font-weight="700" font-size="56" stroke="#aaa" stroke-width="3">du</text>
<text x="250" y="117" font-family="Noto Sans CJK SC" font-weight="900" font-size="66">经验</text>
<text x="4" y="174" font-family="Open Sans" font-weight="400" font-size="45">jingyan.baidu.com</text></svg>`);

element('slides-app', `
:host{display:flex;flex-direction:column;height:100vh;min-height:1200px;position:relative;overflow:hidden}
header{background:#f4f4f4;box-shadow:0 1px 4px rgba(0,0,0,.2);position:relative;z-index:2}
main{display:flex;flex:1;min-height:0}`,
`<header><title-bar></title-bar><tool-ribbon></tool-ribbon></header>
<main><slide-panel></slide-panel><slide-stage></slide-stage><side-rail></side-rail></main>
<status-bar></status-bar><site-mark></site-mark>`);
</script>
</body>
</html>
